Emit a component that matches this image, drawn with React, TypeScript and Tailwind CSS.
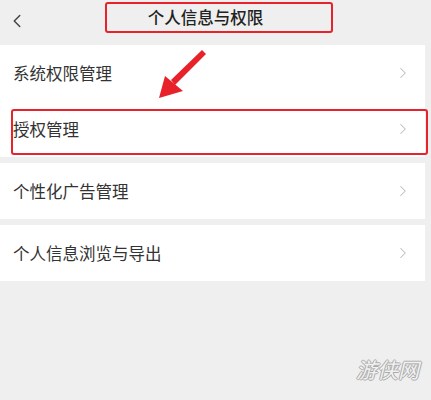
import { ChevronLeft, ChevronRight } from "lucide-react";

const font = { fontFamily: '"Noto Sans CJK SC", "Noto Sans", sans-serif' };

function Row({ label, boxed }: { label: string; boxed?: boolean }) {
  return (
    <div className="relative flex h-[56px] items-center justify-between pl-[13px] pr-[13px]">
      <span className="text-[16.5px] text-[#333]">{label}</span>
      <ChevronRight className="h-[18px] w-[18px] text-[#bdbdbd]" strokeWidth={1.4} />
      {boxed && (
        <div className="absolute left-[11px] right-[-3px] top-[8px] bottom-[2px] rounded-[3px] border-2 border-[#e8222a]" />
      )}
    </div>
  );
}

export default function App() {
  return (
    <div className="relative h-[400px] w-[431px] overflow-hidden bg-[#efefef]" style={font}>
      <header className="relative flex h-[45px] items-center justify-center">
        <ChevronLeft className="absolute left-[6px] top-[10px] h-[22px] w-[22px] text-[#444]" strokeWidth={1.6} />
        <div className="mb-[10px] mr-[-6px] flex h-[31px] w-[228px] items-center justify-center rounded-[3px] border-2 border-[#e8222a] pr-[26px]">
          <span className="text-[16.5px] font-medium text-[#222]">个人信息与权限</span>
        </div>
      </header>

      <div className="mr-[6px] flex flex-col gap-[6px]">
        <div className="bg-white">
          <Row label="系统权限管理" />
          <Row label="授权管理" boxed />
        </div>
        <div className="bg-white">
          <Row label="个性化广告管理" />
        </div>
        <div className="bg-white">
          <Row label="个人信息浏览与导出" />
        </div>
      </div>

      <svg className="absolute left-0 top-0" width="431" height="120">
        <path d="M202 50 L171 80 L175 85 L206 54 Z" fill="#e8222a" />
        <path d="M159 98 L165 76 L183 91 Z" fill="#e8222a" />
      </svg>

      <div
        className="absolute left-[356px] top-[354px] text-[21px] italic text-[#f2f2f2]"
        style={{ textShadow: "1px 0 0 #aaa, -1px 0 0 #aaa, 0 1px 0 #aaa, 0 -1px 0 #aaa" }}
      >
        游侠网
      </div>
    </div>
  );
}
